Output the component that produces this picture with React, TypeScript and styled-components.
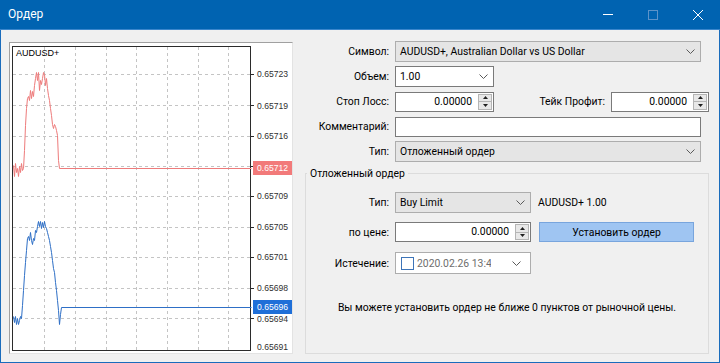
import React from 'react';
import styled, { createGlobalStyle } from 'styled-components';

const UI_FONT = 'Roboto, "Noto Sans", "DejaVu Sans", sans-serif';
const CHART_FONT = '"Liberation Sans", Arial, sans-serif';

const GlobalStyle = createGlobalStyle`
  html, body {
    margin: 0;
    padding: 0;
    background: #f0f0f0;
  }
  body {
    font-family: ${UI_FONT};
    font-size: 10.4px;
    line-height: 15px;
    color: #000;
  }
  * {
    box-sizing: border-box;
  }
`;

// точки графика в координатах окна
const bidPoints: [number, number][] = [
  [13, 165], [14, 176], [15, 163], [16, 172], [17, 168], [18, 176], [19, 166], [20, 172],
  [21, 163], [22, 170], [23, 168], [24, 150], [25, 125], [26, 108], [27, 98], [28, 96],
  [29, 100], [30, 90], [31, 98], [32, 91], [33, 96], [34, 85], [35, 78], [36, 72],
  [37, 80], [38, 72], [39, 90], [40, 80], [41, 84], [42, 78], [43, 72], [44, 74],
  [45, 85], [46, 78], [47, 88], [48, 95], [49, 100], [50, 108], [51, 115], [52, 124],
  [53, 128], [54, 124], [55, 126], [56, 130], [57, 135], [58, 160], [59, 168], [251, 168],
];

const askPoints: [number, number][] = [
  [13, 316], [14, 322], [15, 316], [16, 324], [17, 318], [18, 324], [19, 320], [20, 316],
  [21, 318], [22, 305], [23, 290], [24, 275], [25, 262], [26, 250], [27, 238], [28, 236],
  [29, 240], [30, 232], [31, 240], [32, 244], [33, 238], [34, 240], [35, 230], [36, 232],
  [37, 226], [38, 221], [39, 226], [40, 221], [41, 228], [42, 222], [43, 227], [44, 221],
  [45, 226], [46, 228], [47, 232], [48, 236], [49, 240], [50, 246], [51, 252], [52, 260],
  [53, 268], [54, 272], [55, 282], [56, 290], [57, 300], [58, 310], [59, 324], [60, 314],
  [61, 307], [251, 307],
];

const gridY = [74, 105, 136, 166, 196, 227, 257, 288, 318];
const gridX = [44, 75, 106, 136, 167, 198, 228];

const priceLabels: [string, number][] = [
  ['0.65723', 74],
  ['0.65719', 106],
  ['0.65716', 136],
  ['0.65709', 196],
  ['0.65705', 227],
  ['0.65701', 257],
  ['0.65698', 288],
  ['0.65694', 319],
  ['0.65691', 347],
];

const toPath = (pts: [number, number][]) =>
  pts.map(([x, y], i) => `${i ? 'L' : 'M'}${x + 0.5} ${y + 0.5}`).join(' ');

const Chevron = () => (
  <svg width="9" height="5" viewBox="0 0 9 5">
    <polyline points="0.5,0.5 4.5,4.5 8.5,0.5" fill="none" stroke="#5a5a5a" strokeWidth="1" />
  </svg>
);

const SpinArrow = ({ down }: { down?: boolean }) => (
  <svg width="5" height="3" viewBox="0 0 5 3">
    <polygon points={down ? '0,0 5,0 2.5,3' : '0,3 5,3 2.5,0'} fill="#202020" />
  </svg>
);

const SpinControl = () => (
  <Spinner>
    <SpinButton>
      <SpinArrow />
    </SpinButton>
    <SpinButton>
      <SpinArrow down />
    </SpinButton>
  </Spinner>
);

const PriceChart = () => (
  <svg width="282" height="310" viewBox="10 43 282 310">
    <rect x="12.5" y="46.5" width="238" height="304" fill="#fff" stroke="#2b2b2b" />
    <g stroke="#c4c4c4" strokeDasharray="3 3">
      {gridY.map(y => (
        <line key={`h${y}`} x1="13" y1={y + 0.5} x2="250" y2={y + 0.5} />
      ))}
      {gridX.map(x => (
        <line key={`v${x}`} x1={x + 0.5} y1="47" x2={x + 0.5} y2="350" />
      ))}
    </g>
    <g stroke="#2b2b2b">
      {gridY.map(y => (
        <line key={`t${y}`} x1="251" y1={y + 0.5} x2="254" y2={y + 0.5} />
      ))}
    </g>
    <path d={toPath(bidPoints)} fill="none" stroke="#ee7b7b" strokeWidth="1" />
    <path d={toPath(askPoints)} fill="none" stroke="#2e6fc6" strokeWidth="1" />
    <text x="16" y="56" fontFamily={CHART_FONT} fontSize="9" fill="#000">
      AUDUSD+
    </text>
    <g fontFamily={CHART_FONT} fontSize="8.6" fill="#303030">
      {priceLabels.map(([label, y]) => (
        <text key={label} x="257" y={y + 3}>
          {label}
        </text>
      ))}
    </g>
    <rect x="253" y="161" width="39" height="14" fill="#f27a7a" />
    <text x="257" y="171" fontFamily={CHART_FONT} fontSize="8.6" fill="#fff">
      0.65712
    </text>
    <rect x="253" y="300" width="39" height="14" fill="#1f6fd8" />
    <text x="257" y="310" fontFamily={CHART_FONT} fontSize="8.6" fill="#fff">
      0.65696
    </text>
  </svg>
);

const App = () => (
  <>
    <GlobalStyle />
    <Window>
      <TitleBar>
        <Title>Ордер</Title>
        <Controls>
          <TitleButton>
            <svg width="10" height="1" viewBox="0 0 10 1">
              <rect width="10" height="1" fill="#fff" />
            </svg>
          </TitleButton>
          <TitleButton>
            <svg width="10" height="10" viewBox="0 0 10 10">
              <rect x="0.5" y="0.5" width="9" height="9" fill="none" stroke="#5c93c9" />
            </svg>
          </TitleButton>
          <TitleButton>
            <svg width="10" height="10" viewBox="0 0 10 10">
              <path d="M0 0 L10 10 M10 0 L0 10" stroke="#fff" strokeWidth="1" />
            </svg>
          </TitleButton>
        </Controls>
      </TitleBar>

      <Body>
        <ChartPanel>
          <PriceChart />
        </ChartPanel>

        <FormPanel>
          <FormRow>
            <Label>Символ:</Label>
            <Combo $width={306}>
              <span>AUDUSD+, Australian Dollar vs US Dollar</span>
              <Chevron />
            </Combo>
          </FormRow>
          <FormRow>
            <Label>Объем:</Label>
            <Combo $width={99} $editable>
              <span>1.00</span>
              <Chevron />
            </Combo>
          </FormRow>
          <FormRow>
            <Label>Стоп Лосс:</Label>
            <NumberBox $width={99}>
              <NumberValue>0.00000</NumberValue>
              <SpinControl />
            </NumberBox>
            <SideLabel>Тейк Профит:</SideLabel>
            <NumberBox $width={98}>
              <NumberValue>0.00000</NumberValue>
              <SpinControl />
            </NumberBox>
          </FormRow>
          <FormRow>
            <Label>Комментарий:</Label>
            <TextBox $width={306} />
          </FormRow>
          <FormRow>
            <Label>Тип:</Label>
            <Combo $width={306}>
              <span>Отложенный ордер</span>
              <Chevron />
            </Combo>
          </FormRow>

          <Group>
            <Legend>Отложенный ордер</Legend>
            <GroupRow $gap={0}>
              <Label $inGroup>Тип:</Label>
              <Combo $width={136}>
                <span>Buy Limit</span>
                <Chevron />
              </Combo>
              <Info>AUDUSD+ 1.00</Info>
            </GroupRow>
            <GroupRow $gap={9}>
              <Label $inGroup>по цене:</Label>
              <NumberBox $width={136}>
                <NumberValue>0.00000</NumberValue>
                <SpinControl />
              </NumberBox>
              <PlaceButton>Установить ордер</PlaceButton>
            </GroupRow>
            <GroupRow $gap={10}>
              <Label $inGroup>Истечение:</Label>
              <DatePicker>
                <CheckBox />
                <DateText>2020.02.26 13:48</DateText>
                <Chevron />
              </DatePicker>
            </GroupRow>
            <Message>Вы можете установить ордер не ближе 0 пунктов от рыночной цены.</Message>
          </Group>
        </FormPanel>
      </Body>
    </Window>
  </>
);

export default App;

const Window = styled.div`
  width: 720px;
  height: 363px;
  display: flex;
  flex-direction: column;
  background: #f0f0f0;
  border: 1px solid #1a6cbc;
  border-top: none;
`;

const TitleBar = styled.div`
  display: flex;
  align-items: center;
  justify-content: space-between;
  height: 30px;
  margin: 0 -1px;
  padding-left: 8px;
  background: #0063b1;
  border-bottom: 1px solid #3a86cc;
`;

const Title = styled.span`
  color: #fff;
  font-size: 12px;
`;

const Controls = styled.div`
  display: flex;
  height: 100%;
`;

const TitleButton = styled.div`
  display: flex;
  align-items: center;
  justify-content: center;
  width: 45px;
  height: 100%;
`;

const Body = styled.div`
  flex: 1;
  display: flex;
  padding: 11px 10px 8px 8px;
`;

const ChartPanel = styled.div`
  width: 284px;
  height: 312px;
  margin-top: 1px;
  background: #fff;
  border: 1px solid #a0a0a0;
  border-right-color: #e3e3e3;
  border-bottom-color: #e3e3e3;

  svg {
    display: block;
  }
`;

const FormPanel = styled.div`
  flex: 1;
  display: flex;
  flex-direction: column;
  gap: 4px;
  margin-left: 12px;
`;

const FormRow = styled.div`
  display: flex;
  align-items: center;
  gap: 6px;
  height: 21px;
`;

const Label = styled.span<{ $inGroup?: boolean }>`
  flex: none;
  width: ${p => (p.$inGroup ? 83 : 84)}px;
  text-align: right;
  white-space: nowrap;
`;

const SideLabel = styled.span`
  flex: 1;
  text-align: right;
  white-space: nowrap;
`;

const Combo = styled.div<{ $width: number; $editable?: boolean }>`
  flex: none;
  display: flex;
  align-items: center;
  justify-content: space-between;
  width: ${p => p.$width}px;
  height: 21px;
  padding: 0 5px 0 4px;
  background: ${p => (p.$editable ? '#fff' : '#e5e5e5')};
  border: 1px solid ${p => (p.$editable ? '#7a7a7a' : '#adadad')};
  white-space: nowrap;

  svg {
    flex: none;
  }
`;

const TextBox = styled.div<{ $width: number }>`
  width: ${p => p.$width}px;
  height: 20px;
  background: #fff;
  border: 1px solid #7a7a7a;
`;

const NumberBox = styled.div<{ $width: number }>`
  flex: none;
  display: flex;
  width: ${p => p.$width}px;
  height: 20px;
  background: #fff;
  border: 1px solid #7a7a7a;
`;

const NumberValue = styled.span`
  flex: 1;
  padding-right: 5px;
  line-height: 18px;
  text-align: right;
`;

const Spinner = styled.div`
  display: flex;
  flex-direction: column;
  width: 14px;
  margin: 1px;
  border: 1px solid #b5b5b5;
  background: #e8e8e8;
`;

const SpinButton = styled.div`
  flex: 1;
  display: flex;
  align-items: center;
  justify-content: center;

  & + & {
    border-top: 1px solid #b5b5b5;
  }
`;

const Group = styled.fieldset`
  flex: 1;
  margin: 0;
  padding: 11px 0 0 0;
  border: 1px solid #dcdcdc;
  display: flex;
  flex-direction: column;
`;

const Legend = styled.legend`
  margin-left: 1px;
  padding: 0 3px 0 3px;
  line-height: 15px;
`;

const GroupRow = styled.div<{ $gap: number }>`
  display: flex;
  align-items: center;
  gap: 6px;
  margin-top: ${p => p.$gap}px;
`;

const Info = styled.span`
  margin-left: 1px;
  white-space: nowrap;
`;

const PlaceButton = styled.div`
  display: flex;
  align-items: center;
  justify-content: center;
  width: 155px;
  height: 20px;
  margin-left: 2px;
  background: #9fc5f2;
  border: 1px solid #78a5dd;
`;

const DatePicker = styled.div`
  display: flex;
  align-items: center;
  width: 136px;
  height: 22px;
  padding: 0 9px 0 5px;
  background: #fff;
  border: 1px solid #adadad;

  svg {
    flex: none;
    margin-left: auto;
  }
`;

const CheckBox = styled.span`
  flex: none;
  width: 13px;
  height: 13px;
  border: 1px solid #3d74b8;
  background: #fff;
`;

const DateText = styled.span`
  flex: none;
  width: 74px;
  margin-left: 3px;
  overflow: hidden;
  white-space: nowrap;
  color: #6d6d6d;
`;

const Message = styled.div`
  margin-top: 26px;
  text-align: center;
  white-space: nowrap;
`;
